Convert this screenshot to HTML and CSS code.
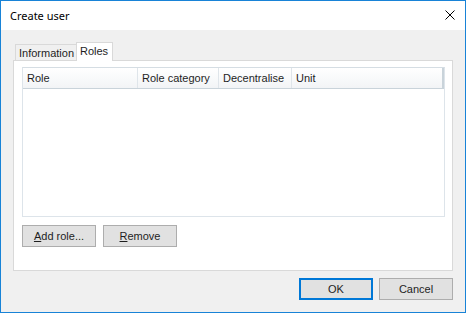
FILE: index.html
```html
<!DOCTYPE html>
<html lang="en">
<head>
    <meta charset="UTF-8">
    <title>Create user</title>
    <link rel="stylesheet" href="styles.css">
</head>
<body>
    <div class="window">
        <div class="titlebar">
            <span class="title">Create user</span>
            <svg class="close" width="10" height="10" viewBox="0 0 10 10">
                <path d="M0.5 0.5 L9.5 9.5 M9.5 0.5 L0.5 9.5" stroke="#000" stroke-width="1"/>
            </svg>
        </div>
        <div class="content">
            <div class="tabs">
                <div class="tab">Information</div>
                <div class="tab active">Roles</div>
            </div>
            <div class="panel">
                <div class="list">
                    <div class="list-header">
                        <div class="col col-role">Role</div>
                        <div class="col col-category">Role category</div>
                        <div class="col col-decentral">Decentralise</div>
                        <div class="col col-unit">Unit</div>
                    </div>
                </div>
                <div class="panel-buttons">
                    <button class="btn"><u>A</u>dd role...</button>
                    <button class="btn"><u>R</u>emove</button>
                </div>
            </div>
            <div class="footer">
                <button class="btn default">OK</button>
                <button class="btn">Cancel</button>
            </div>
        </div>
    </div>
</body>
</html>
```

FILE: styles.css
```css
html, body {
    margin: 0;
    padding: 0;
}

body {
    font-family: 'Liberation Sans', Arial, sans-serif;
    font-size: 11px;
    color: #000;
}

.window {
    width: 466px;
    height: 313px;
    box-sizing: border-box;
    border: 1px solid #1883d7;
    display: flex;
    flex-direction: column;
    background-color: #f0f0f0;
}

.titlebar {
    height: 29px;
    background-color: #fff;
    display: flex;
    align-items: center;
    justify-content: space-between;
    padding: 0 10px 0 9px;
}

.title {
    font-family: 'Noto Sans', 'Open Sans', sans-serif;
    font-size: 11px;
    margin-top: -1px;
}

.close {
    margin-top: -1px;
}

.content {
    flex: 1;
    padding: 12px 12px 0 12px;
    display: flex;
    flex-direction: column;
}

/* tab strip */
.tabs {
    display: flex;
    align-items: flex-end;
    padding-left: 2px;
    height: 18px;
}

.tab {
    height: 16px;
    box-sizing: border-box;
    padding: 0 0 0 3px;
    line-height: 16px;
    font-size: 11px;
    color: #1e1e1e;
    border: 1px solid #d9d9d9;
    border-bottom: none;
    background-color: #f0f0f0;
    width: 61px;
}

.tab.active {
    height: 19px;
    margin-bottom: -1px;
    background-color: #fff;
    width: 37px;
    border-left: 1px solid #d9d9d9;
    line-height: 16px;
    position: relative;
    z-index: 1;
}

.tab:first-child {
    border-right: none;
}

.panel {
    height: 211px;
    box-sizing: border-box;
    background-color: #fff;
    border: 1px solid #d9d9d9;
    padding: 6px 7px 0 8px;
}

/* list view */
.list {
    height: 150px;
    box-sizing: border-box;
    border: 1px solid #dde4ea;
    border-top-color: #d5dde3;
}

.list-header {
    display: flex;
    height: 21px;
    box-sizing: border-box;
    border-bottom: 1px solid #c9d3da;
    background: linear-gradient(#ffffff, #f2f4f6);
}

.col {
    box-sizing: border-box;
    padding-left: 4px;
    line-height: 20px;
    font-size: 11px;
    color: #1e1e1e;
    border-right: 1px solid #dfe5ea;
}

.col-role { width: 115px; }
.col-category { width: 81px; }
.col-decentral { width: 73px; }
.col-unit { flex: 1; border-right: 2px solid #c9d3da; }

.panel-buttons {
    display: flex;
    gap: 7px;
    margin-top: 8px;
}

.btn {
    width: 74px;
    height: 22px;
    box-sizing: border-box;
    font-family: 'Liberation Sans', Arial, sans-serif;
    font-size: 11px;
    color: #1e1e1e;
    background-color: #e1e1e1;
    border: 1px solid #adadad;
    padding: 0;
}

.btn u {
    text-underline-offset: 1px;
}

.footer {
    display: flex;
    justify-content: flex-end;
    gap: 6px;
    margin-top: 7px;
}

.btn.default {
    width: 74px;
    border: 2px solid #0078d7;
}
```
